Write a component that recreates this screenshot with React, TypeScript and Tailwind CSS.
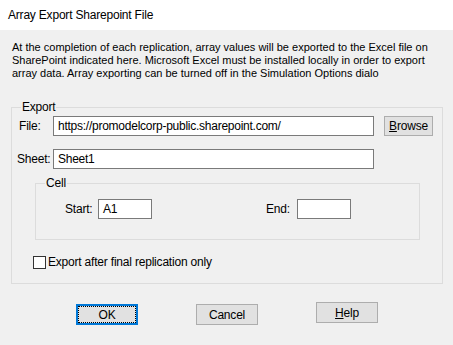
import React from "react";

const font = { fontFamily: '"Liberation Sans", Arial, sans-serif' };

function Input({ value, w }: { value?: string; w: string }) {
  return (
    <div
      className={`${w} h-[20px] bg-white border border-[#7a7a7a] flex items-center pl-[4px] text-[12px] tracking-[-0.25px] text-black leading-none whitespace-nowrap`}
    >
      {value}
    </div>
  );
}

function Btn({ children, focus }: { children: React.ReactNode; focus?: boolean }) {
  if (focus) {
    return (
      <div className="w-[62px] h-[21px] border-2 border-[#0078d7] bg-[#e1e1e1]">
        <div className="w-full h-full border border-dotted border-black flex items-center justify-center text-[12px] leading-none">
          {children}
        </div>
      </div>
    );
  }
  return (
    <div className="w-[62px] h-[21px] border border-[#adadad] bg-[#e1e1e1] flex items-center justify-center text-[12px] leading-none">
      {children}
    </div>
  );
}

export default function App() {
  return (
    <div className="w-[453px] h-[345px] bg-[#f0f0f0] text-black overflow-hidden tracking-[-0.2px]" style={font}>
      <div className="h-[30px] bg-white flex items-center pl-[8px] text-[12px]">
        Array Export Sharepoint File
      </div>
      <div className="h-[77px] pt-[11px] px-[12px] text-[11px] tracking-normal leading-[13px] whitespace-nowrap">
        At the completion of each replication, array values will be exported to the Excel file on
        <br />
        SharePoint indicated here. Microsoft Excel must be installed locally in order to export
        <br />
        array data. Array exporting can be turned off in the Simulation Options dialo
      </div>
      <div className="relative ml-[11px] w-[432px] h-[177px] border border-[#dcdcdc]">
        <span className="absolute left-[9px] top-[-8px] px-[1px] bg-[#f0f0f0] text-[12px] leading-[14px]">
          Export
        </span>
        <div className="flex items-center pt-[8px]">
          <div className="w-[41px] pl-[7px] text-[12px]">File:</div>
          <Input w="w-[321px]" value="https://promodelcorp-public.sharepoint.com/" />
          <div className="ml-[10px]">
            <div className="w-[49px] h-[20px] border border-[#adadad] bg-[#e1e1e1] flex items-center justify-center text-[12px] leading-none">
              <span>
                <span className="underline">B</span>rowse
              </span>
            </div>
          </div>
        </div>
        <div className="flex items-center mt-[13px]">
          <div className="w-[41px] pl-[5px] text-[12px]">Sheet:</div>
          <Input w="w-[321px]" value="Sheet1" />
        </div>
        <div className="relative ml-[23px] mt-[14px] w-[385px] h-[57px] border border-[#dcdcdc]">
          <span className="absolute left-[9px] top-[-8px] px-[1px] bg-[#f0f0f0] text-[12px] leading-[14px]">
            Cell
          </span>
          <div className="flex items-center pt-[15px]">
            <div className="w-[62px] pl-[29px] text-[12px]">Start:</div>
            <Input w="w-[54px]" value="A1" />
            <div className="ml-[114px] w-[31px] text-[12px]">End:</div>
            <Input w="w-[54px]" />
          </div>
        </div>
        <div className="flex items-center mt-[15px] ml-[21px]">
          <div className="w-[13px] h-[13px] border border-[#333333] bg-white" />
          <div className="ml-[2px] text-[12px] leading-[14px]">Export after final replication only</div>
        </div>
      </div>
      <div className="flex items-start ml-[76px] mt-[18px] gap-[58px]">
        <div className="mt-[2px]">
          <Btn focus>OK</Btn>
        </div>
        <div className="mt-[2px]">
          <Btn>Cancel</Btn>
        </div>
        <Btn>
          <span>
            <span className="underline">H</span>elp
          </span>
        </Btn>
      </div>
    </div>
  );
}
